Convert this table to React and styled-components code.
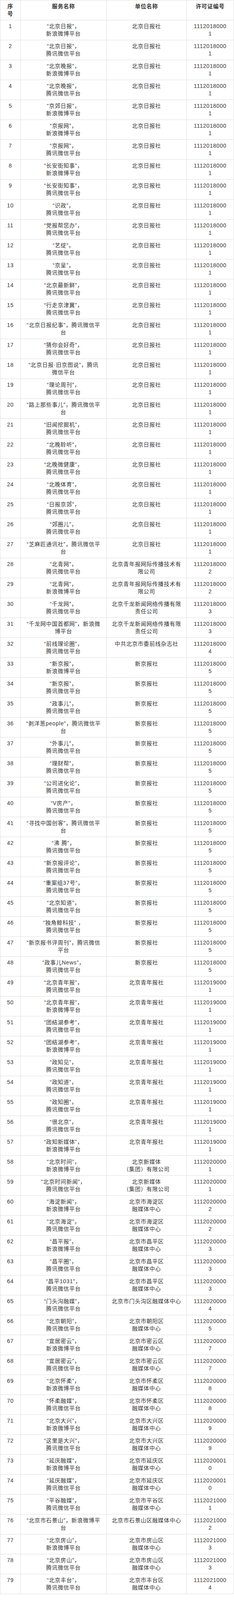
import React from 'react'
import styled, { createGlobalStyle } from 'styled-components'

// the browser window is only 4096px tall, so rows are kept at 51px
// (65px in the source) to get all 79 entries into the picture

const GlobalStyle = createGlobalStyle`
  html, body {
    margin: 0;
    padding: 0;
    background: #fff;
  }
  body {
    font-family: "Liberation Sans", "Noto Sans CJK SC", sans-serif;
    color: #333;
  }
`

const Table = styled.table`
  width: 598px;
  table-layout: fixed;
  border-collapse: collapse;
  font-size: 14px;
  line-height: 19px;
  letter-spacing: 0.8px;
`

const HeadCell = styled.th`
  border: 1px solid #dedede;
  padding: 6px ${props => props.$padX}px;
  vertical-align: top;
  text-align: center;
  font-weight: bold;
  color: #333;
`

const Cell = styled.td`
  border: 1px solid #dedede;
  padding: 6px ${props => props.$padX}px;
  vertical-align: top;
  text-align: center;
  white-space: pre-line;
  word-break: ${props => props.$breakAll ? 'break-all' : 'normal'};
`

const cols = [
  { width: 52, padX: 12 },
  { width: 220, padX: 14 },
  { width: 205, padX: 12 },
  { width: 121, padX: 15 },
]

const WX = '腾讯微信平台'
const WB = '新浪微博平台'
const BJRB = '北京日报社'
const XJB = '新京报社'
const BQ = '北京青年报社'

const rows = [
  ['“北京日报”，\n' + WB, BJRB, '11120180001'],
  ['“北京日报”，\n' + WX, BJRB, '11120180001'],
  ['“北京晚报”，\n' + WB, BJRB, '11120180001'],
  ['“北京晚报”，\n' + WX, BJRB, '11120180001'],
  ['“京郊日报”，\n' + WB, BJRB, '11120180001'],
  ['“京报网”，\n' + WB, BJRB, '11120180001'],
  ['“京报网”，\n' + WX, BJRB, '11120180001'],
  ['“长安街知事”，\n' + WB, BJRB, '11120180001'],
  ['“长安街知事”，\n' + WX, BJRB, '11120180001'],
  ['“识政”，\n' + WX, BJRB, '11120180001'],
  ['“党报帮您办”，\n' + WX, BJRB, '11120180001'],
  ['“艺绽”，\n' + WX, BJRB, '11120180001'],
  ['“京呈”，\n' + WX, BJRB, '11120180001'],
  ['“北京最新鲜”，\n' + WX, BJRB, '11120180001'],
  ['“行走京津冀”，\n' + WX, BJRB, '11120180001'],
  ['“北京日报纪事”，' + WX, BJRB, '11120180001'],
  ['“猜你会好奇”，\n' + WX, BJRB, '11120180001'],
  ['“北京日报·旧京图说”，' + WX, BJRB, '11120180001'],
  ['“理论周刊”，\n' + WX, BJRB, '11120180001'],
  ['“路上那些事儿”，' + WX, BJRB, '11120180001'],
  ['“旧闻挖掘机”，\n' + WX, BJRB, '11120180001'],
  ['“北晚聆听”，\n' + WX, BJRB, '11120180001'],
  ['“北晚微健康”，\n' + WX, BJRB, '11120180001'],
  ['“北晚体育”，\n' + WX, BJRB, '11120180001'],
  ['“日报京郊”，\n' + WX, BJRB, '11120180001'],
  ['“郊圈儿”，\n' + WX, BJRB, '11120180001'],
  ['“芝麻匠通讯社”，' + WX, BJRB, '11120180001'],
  ['“北青网”，\n' + WX, '北京青年报网际传播技术有限公司', '11120180002'],
  ['“北青网”，\n' + WB, '北京青年报网际传播技术有限公司', '11120180002'],
  ['“千龙网”，\n' + WX, '北京千龙新闻网络传播有限责任公司', '11120180003'],
  ['“千龙网中国首都网”，' + WB, '北京千龙新闻网络传播有限责任公司', '11120180003'],
  ['“前线理论圈”，\n' + WX, '中共北京市委前线杂志社', '11120180004'],
  ['“新京报”，\n' + WB, XJB, '11120180005'],
  ['“新京报”，\n' + WX, XJB, '11120180005'],
  ['“政事儿”，\n' + WX, XJB, '11120180005'],
  ['“剥洋葱people”，' + WX, XJB, '11120180005'],
  ['“外事儿”，\n' + WX, XJB, '11120180005'],
  ['“理财帮”，\n' + WX, XJB, '11120180005'],
  ['“公司进化论”，\n' + WX, XJB, '11120180005'],
  ['“V房产”，\n' + WX, XJB, '11120180005'],
  ['“寻找中国创客”，' + WX, XJB, '11120180005'],
  ['“沸 腾”，\n' + WX, XJB, '11120180005'],
  ['“新京报评论”，\n' + WX, XJB, '11120180005'],
  ['“重案组37号”，\n' + WX, XJB, '11120180005'],
  ['“北京知道”，\n' + WX, XJB, '11120180005'],
  ['“独角鲸科技” ，\n' + WX, XJB, '11120180005'],
  ['“新京报书评周刊”，' + WX, XJB, '11120180005'],
  ['“政事儿News”，\n' + WX, XJB, '11120180005'],
  ['“北京青年报”，\n' + WX, BQ, '11120190001'],
  ['“北京青年报”，\n' + WB, BQ, '11120190001'],
  ['“团结湖参考”，\n' + WX, BQ, '11120190001'],
  ['“团结湖参考”，\n' + WB, BQ, '11120190001'],
  ['“政知见”，\n' + WX, BQ, '11120190001'],
  ['“政知道”，\n' + WX, BQ, '11120190001'],
  ['“政知圈”，\n' + WX, BQ, '11120190001'],
  ['“很北京”，\n' + WX, BQ, '11120190001'],
  ['“政知新媒体”，\n' + WB, BQ, '11120190001'],
  ['“北京时间”，\n' + WB, '北京新媒体\n（集团）有限公司', '11120200001'],
  ['“北京时间新闻”，\n' + WX, '北京新媒体\n（集团）有限公司', '11120200001'],
  ['“海淀新闻”，\n' + WB, '北京市海淀区\n融媒体中心', '11120200002'],
  ['“北京海淀”，\n' + WX, '北京市海淀区\n融媒体中心', '11120200002'],
  ['“昌平报”，\n' + WB, '北京市昌平区\n融媒体中心', '11120200003'],
  ['“昌平圈”，\n' + WX, '北京市昌平区\n融媒体中心', '11120200003'],
  ['“昌平1031”，\n' + WX, '北京市昌平区\n融媒体中心', '11120200003'],
  ['“门头沟融媒”，\n' + WX, '北京市门头沟区融媒体中心', '11120200004'],
  ['“北京朝阳”，\n' + WX, '北京市朝阳区\n融媒体中心', '11120200005'],
  ['“宜居密云”，\n' + WB, '北京市密云区\n融媒体中心', '11120200007'],
  ['“宜居密云”，\n' + WX, '北京市密云区\n融媒体中心', '11120200007'],
  ['“北京怀柔”，\n' + WB, '北京市怀柔区\n融媒体中心', '11120200008'],
  ['“怀柔融媒”，\n' + WX, '北京市怀柔区\n融媒体中心', '11120200008'],
  ['“北京大兴”，\n' + WB, '北京市大兴区\n融媒体中心', '11120200009'],
  ['“这里是大兴”，\n' + WX, '北京市大兴区\n融媒体中心', '11120200009'],
  ['“延庆融媒”，\n' + WB, '北京市延庆区\n融媒体中心', '11120200010'],
  ['“延庆融媒”，\n' + WX, '北京市延庆区\n融媒体中心', '11120200010'],
  ['“平谷融媒”，\n' + WX, '北京市平谷区\n融媒体中心', '11120210001'],
  ['“北京市石景山”，' + WB, '北京市石景山区融媒体中心', '11120210002'],
  ['“北京房山”，\n' + WB, '北京市房山区\n融媒体中心', '11120210003'],
  ['“北京房山”，\n' + WX, '北京市房山区\n融媒体中心', '11120210003'],
  ['“北京丰台”，\n' + WX, '北京市丰台区\n融媒体中心', '11120210004'],
]

const headers = ['序号', '服务名称', '单位名称', '许可证编号']

function App() {
  return (
    <>
      <GlobalStyle />
      <Table>
        <colgroup>
          {cols.map((col, i) => <col key={i} style={{width: col.width}} />)}
        </colgroup>
        <thead>
          <tr>
            {headers.map((head, i) => (
              <HeadCell key={head} $padX={cols[i].padX}>{head}</HeadCell>
            ))}
          </tr>
        </thead>
        <tbody>
          {rows.map((row, rowIndex) => (
            <tr key={rowIndex}>
              <Cell $padX={cols[0].padX}>{rowIndex + 1}</Cell>
              <Cell $padX={cols[1].padX}>{row[0]}</Cell>
              <Cell $padX={cols[2].padX}>{row[1]}</Cell>
              <Cell $padX={cols[3].padX} $breakAll>{row[2]}</Cell>
            </tr>
          ))}
        </tbody>
      </Table>
    </>
  )
}

export default App
